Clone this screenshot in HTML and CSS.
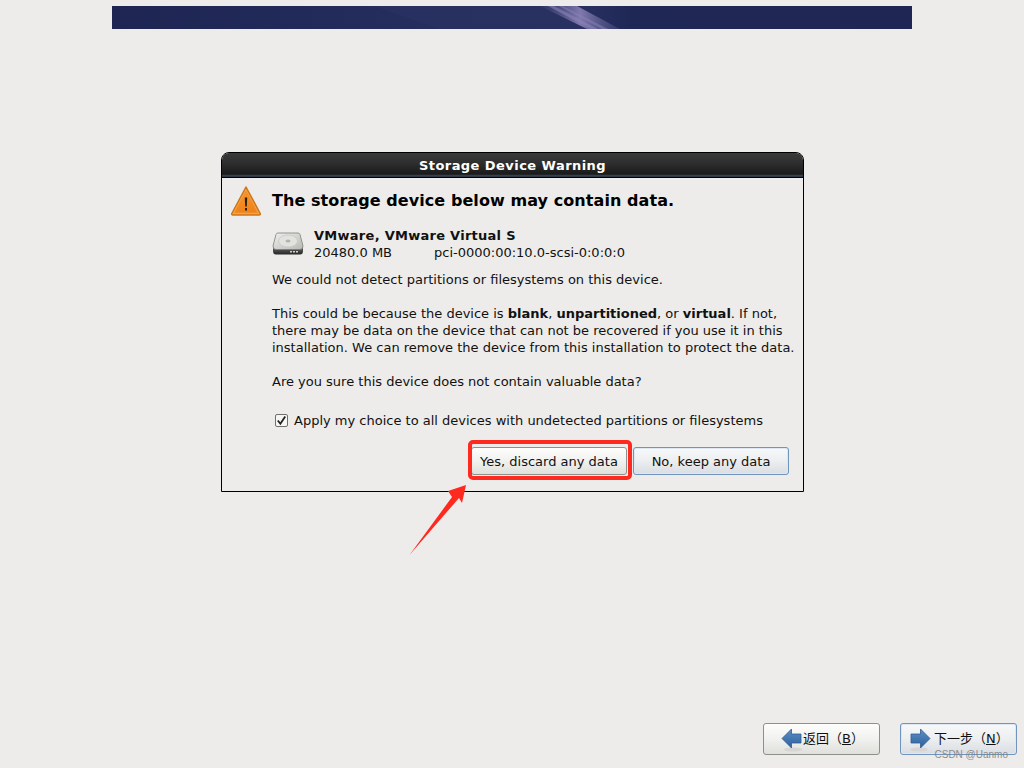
FILE: index.html
```html
<!DOCTYPE html>
<html lang="en">
<head>
<meta charset="utf-8">
<title>Storage Device Warning</title>
<link rel="stylesheet" href="styles.css">
</head>
<body>
<div class="screen">
  <header class="banner">
    <svg class="banner-art" viewBox="0 0 800 23" preserveAspectRatio="none" aria-hidden="true">
      <defs>
        <linearGradient id="bannerBg" x1="0" x2="1" y1="0" y2="0">
          <stop offset="0" stop-color="#1e2553"/>
          <stop offset="0.2" stop-color="#212958"/>
          <stop offset="0.4" stop-color="#262e5e"/>
          <stop offset="0.6" stop-color="#272f5f"/>
          <stop offset="0.65" stop-color="#1f2755"/>
          <stop offset="1" stop-color="#1f2654"/>
        </linearGradient>
        <linearGradient id="streak" x1="0" x2="1" y1="0" y2="0">
          <stop offset="0" stop-color="#4d5187" stop-opacity="0.2"/>
          <stop offset="0.5" stop-color="#8179ad"/>
          <stop offset="1" stop-color="#4d5187" stop-opacity="0.4"/>
        </linearGradient>
      </defs>
      <rect width="800" height="23" fill="url(#bannerBg)"/>
      <polygon points="262,0 428,0 475,23 327,23" fill="#2a3363" opacity="0.55"/>
      <polygon points="428,0 465,0 508,23 475,23" fill="url(#streak)"/>
      <polygon points="436,0 442,0 486,23 479,23" fill="#8a82b5" opacity="0.6"/>
      <polygon points="447,0 451,0 496,23 490,23" fill="#8a82b5" opacity="0.5"/>
    </svg>
  </header>

  <main class="stage">
    <section class="dialog">
      <h1 class="dialog-title">Storage Device Warning</h1>
      <div class="dialog-body">
        <div class="heading-row">
          <svg class="warn-icon" viewBox="0 0 32 32" aria-hidden="true">
            <defs>
              <linearGradient id="warnFill" x1="0" x2="0" y1="0" y2="1">
                <stop offset="0" stop-color="#f7952b"/>
                <stop offset="1" stop-color="#f0811a"/>
              </linearGradient>
            </defs>
            <path d="M16 2 L30.200 28.500 Q30.700 30 29 30 L3 30 Q1.300 30 1.800 28.500 Z" fill="#f4a24a" stroke="#cf7417" stroke-width="1.500" stroke-linejoin="round"/>
            <path d="M16 6.500 L27.200 27.500 H4.800 Z" fill="url(#warnFill)" stroke="#ee8a24" stroke-width="0.800" stroke-linejoin="round"/>
            <path d="M14.800 12.500 H17.200 L16.800 21.500 H15.200 Z" fill="#2c1f0c"/>
            <rect x="15" y="23" width="2" height="2.500" fill="#2c1f0c"/>
          </svg>
          <h2 class="heading">The storage device below may contain data.</h2>
        </div>

        <div class="content">
          <div class="device">
            <svg class="disk-icon" viewBox="0 0 32 26" aria-hidden="true">
              <defs>
                <linearGradient id="diskTop" x1="0" x2="1" y1="0" y2="1">
                  <stop offset="0" stop-color="#f0f0ee"/>
                  <stop offset="1" stop-color="#b8b9b5"/>
                </linearGradient>
                <linearGradient id="diskSide" x1="0" x2="0" y1="0" y2="1">
                  <stop offset="0" stop-color="#666"/>
                  <stop offset="1" stop-color="#262626"/>
                </linearGradient>
              </defs>
              <path d="M1 16 V20 Q1 23.500 4 23.500 H28 Q31 23.500 31 20 V16 Z" fill="url(#diskSide)"/>
              <path d="M6 2 H26 Q27.500 2 28 3.500 L31 15 Q31 18.500 28 18.500 H4 Q1 18.500 1 15 L4 3.500 Q4.500 2 6 2 Z" fill="url(#diskTop)" stroke="#7d7e78" stroke-width="0.800"/>
              <ellipse cx="16" cy="10" rx="9.500" ry="6" fill="#e2e2df" stroke="#c8c8c4" stroke-width="0.800"/>
              <ellipse cx="16" cy="10" rx="2.500" ry="1.500" fill="#b2b3ae"/>
              <rect x="18" y="20" width="2" height="1.500" fill="#d0d0d0"/>
              <rect x="21" y="20" width="2" height="1.500" fill="#d0d0d0"/>
              <rect x="24" y="20" width="2" height="1.500" fill="#d0d0d0"/>
            </svg>
            <div class="device-text">
              <div class="device-name">VMware, VMware Virtual S</div>
              <div class="device-meta"><span class="device-size">20480.0 MB</span><span>pci-0000:00:10.0-scsi-0:0:0:0</span></div>
            </div>
          </div>

          <p class="para first">We could not detect partitions or filesystems on this device.</p>
          <p class="para">This could be because the device is <b>blank</b>, <b>unpartitioned</b>, or <b>virtual</b>. If not,<br>there may be data on the device that can not be recovered if you use it in this<br>installation. We can remove the device from this installation to protect the data.</p>
          <p class="para">Are you sure this device does not contain valuable data?</p>
        </div>

        <label class="check-row">
          <span class="checkbox">
            <svg viewBox="0 0 13 13" aria-hidden="true"><path d="M2.800 6.500 L5.400 9.800 L10.200 2.500" fill="none" stroke="#222" stroke-width="1.800"/></svg>
          </span>
          <span>Apply my choice to all devices with undetected partitions or filesystems</span>
        </label>

        <div class="dialog-actions">
          <button class="btn btn-action" type="button">Yes, discard any data<span class="highlight"></span></button>
          <button class="btn btn-action btn-focus" type="button">No, keep any data</button>
        </div>
      </div>
      <svg class="arrow" viewBox="0 0 62 76" aria-hidden="true">
        <path d="M0.500 73 L43 15 L39 9 L57 3 L53 21 L50 16 Z" fill="#ff2a1f"/>
      </svg>
    </section>
  </main>

  <footer class="footer">
    <button class="btn nav-btn nav-back" type="button">
      <svg class="nav-icon" viewBox="0 0 22 24" aria-hidden="true">
        <defs>
          <linearGradient id="arrowFill" x1="0" x2="0" y1="0" y2="1">
            <stop offset="0" stop-color="#5c8fc6"/>
            <stop offset="1" stop-color="#2f5f9c"/>
          </linearGradient>
        </defs>
        <ellipse cx="12" cy="21.500" rx="9" ry="2" fill="#d6d5d3"/>
        <path d="M1 10.500 L10.500 1 V6 H20 V15 H10.500 V20 Z" fill="url(#arrowFill)" stroke="#2e5d94" stroke-width="0.800"/>
      </svg>
      <span class="nav-label">返回（<u>B</u>）</span>
    </button>
    <button class="btn nav-btn nav-next btn-focus" type="button">
      <svg class="nav-icon" viewBox="0 0 22 24" aria-hidden="true">
        <ellipse cx="10" cy="21.500" rx="9" ry="2" fill="#d6d5d3"/>
        <path d="M21 10.500 L11.500 1 V6 H2 V15 H11.500 V20 Z" fill="url(#arrowFill)" stroke="#2e5d94" stroke-width="0.800"/>
      </svg>
      <span class="nav-label">下一步（<u>N</u>）</span>
    </button>
    <span class="watermark">CSDN @Uanmo</span>
  </footer>
</div>
</body>
</html>
```
FILE: styles.css
```css
* { box-sizing: border-box; }

html, body {
  margin: 0;
  padding: 0;
  background: #edecea;
}

body {
  font-family: "DejaVu Sans", "Noto Sans CJK SC", sans-serif;
  font-size: 13px;
  color: #111;
}

.screen {
  width: 1024px;
  height: 768px;
  display: flex;
  flex-direction: column;
  overflow: hidden;
  position: relative;
}

.banner {
  width: 800px;
  height: 23px;
  margin: 6px auto 0;
  flex: none;
}

.banner-art {
  display: block;
  width: 100%;
  height: 100%;
}

.stage {
  flex: 1;
  display: flex;
  justify-content: center;
  align-items: flex-start;
  padding-top: 123px;
}

.dialog {
  position: relative;
  width: 583px;
  height: 340px;
  margin-left: 1px;
  border: 1px solid #000;
  border-radius: 8px 8px 0 0;
  background: #edecea;
  display: flex;
  flex-direction: column;
}

.dialog-title {
  margin: 0;
  height: 25px;
  flex: none;
  border-radius: 7px 7px 0 0;
  background: linear-gradient(#3a3a3a 0, #2f2f2f 40%, #1a1a1a 88%, #3d4f63 96%, #1a1f26 100%);
  border-bottom: 1px solid #000;
  color: #fff;
  font-size: 13px;
  font-weight: bold;
  letter-spacing: 0.45px;
  line-height: 25px;
  text-align: center;
}

.dialog-body {
  flex: 1;
  display: flex;
  flex-direction: column;
  padding: 7px 0 0 8px;
}

.heading-row {
  display: flex;
  align-items: center;
  gap: 10px;
  height: 32px;
}

.warn-icon {
  width: 32px;
  height: 32px;
  flex: none;
}

.heading {
  margin: 0;
  font-size: 16px;
  font-weight: bold;
  letter-spacing: 0.07px;
  line-height: 20px;
  color: #000;
  white-space: nowrap;
}

.content {
  padding: 10px 0 0 42px;
}

.device {
  display: flex;
  align-items: center;
  gap: 10px;
  height: 34px;
}

.disk-icon {
  width: 32px;
  height: 26px;
  flex: none;
}

.device-text {
  line-height: 17px;
}

.device-name {
  font-weight: bold;
  color: #111;
  letter-spacing: 0.27px;
}

.device-meta {
  display: flex;
}

.device-size {
  width: 120px;
}

.para {
  margin: 0 0 17px;
  line-height: 17px;
  white-space: nowrap;
}

.para.first {
  margin-top: 10px;
}

.check-row {
  display: flex;
  align-items: center;
  gap: 6px;
  margin: 3px 0 0 45px;
  height: 20px;
  line-height: 17px;
  white-space: nowrap;
}

.checkbox {
  width: 13px;
  height: 13px;
  flex: none;
  border: 1px solid #6f6f6c;
  border-radius: 2px;
  background: #f6f6f5;
  display: block;
  position: relative;
}

.checkbox svg {
  position: absolute;
  left: -1px;
  top: -1px;
  width: 13px;
  height: 13px;
}

.dialog-actions {
  display: flex;
  justify-content: flex-end;
  gap: 6px;
  margin-top: 17px;
  padding-right: 14px;
}

.btn {
  position: relative;
  font-family: inherit;
  font-size: 13px;
  color: #111;
  height: 28px;
  padding: 0;
  border: 1px solid #8f8f8c;
  border-radius: 3px;
  background: linear-gradient(#fdfdfc 0, #f1f1ef 50%, #dfdfdb 100%);
  white-space: nowrap;
}

.btn-action { width: 156px; }

.btn-focus {
  border-color: #6f94bd;
  background: linear-gradient(#f7f8f9 0, #eceef0 50%, #d9dde3 100%);
  box-shadow: inset 0 0 0 1px #dfe8f2;
}

.highlight {
  position: absolute;
  left: -4px;
  top: -8px;
  width: 164px;
  height: 40px;
  border: 4px solid #ff2a1f;
  border-radius: 5px;
}

.arrow {
  position: absolute;
  left: 187px;
  top: 329px;
  width: 62px;
  height: 76px;
}

.footer {
  flex: none;
  position: relative;
  display: flex;
  justify-content: flex-end;
  gap: 20px;
  padding: 0 7px 13px 0;
}

.nav-btn {
  width: 117px;
  height: 32px;
  display: flex;
  align-items: center;
}

.nav-back {
  padding-left: 17px;
}

.nav-next {
  padding-left: 8px;
  gap: 3px;
}

.nav-icon {
  width: 22px;
  height: 24px;
  flex: none;
  margin-top: 2px;
}

.nav-label {
  margin-bottom: 3px;
}

.watermark {
  position: absolute;
  right: 16px;
  bottom: 8px;
  font-family: "Liberation Sans", sans-serif;
  font-size: 10px;
  color: #7d7d7d;
  opacity: 0.85;
}
```
